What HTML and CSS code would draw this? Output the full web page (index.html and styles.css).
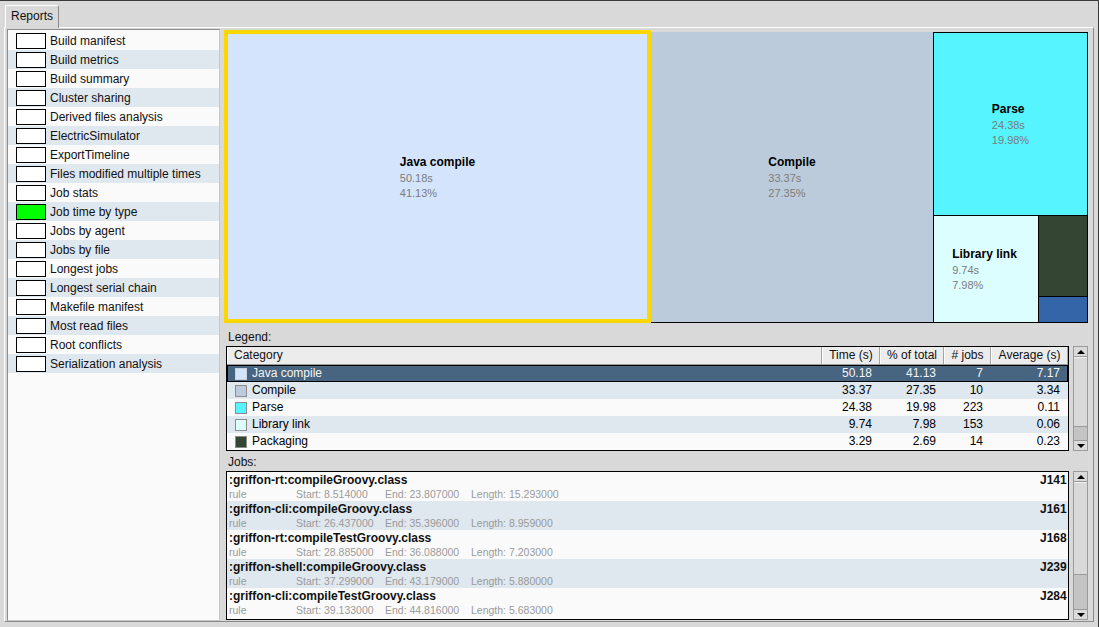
FILE: index.html
```html
<!DOCTYPE html>
<html>
<head>
<meta charset="utf-8">
<title>Reports</title>
<link rel="stylesheet" href="styles.css">
</head>
<body>
<div class="window">
  <div class="tabbar"><div class="tab">Reports</div></div>
  <div class="panel">
    <div class="reports">
      <div class="report"><span class="check"></span><span>Build manifest</span></div>
      <div class="report"><span class="check"></span><span>Build metrics</span></div>
      <div class="report"><span class="check"></span><span>Build summary</span></div>
      <div class="report"><span class="check"></span><span>Cluster sharing</span></div>
      <div class="report"><span class="check"></span><span>Derived files analysis</span></div>
      <div class="report"><span class="check"></span><span>ElectricSimulator</span></div>
      <div class="report"><span class="check"></span><span>ExportTimeline</span></div>
      <div class="report"><span class="check"></span><span>Files modified multiple times</span></div>
      <div class="report"><span class="check"></span><span>Job stats</span></div>
      <div class="report"><span class="check on"></span><span>Job time by type</span></div>
      <div class="report"><span class="check"></span><span>Jobs by agent</span></div>
      <div class="report"><span class="check"></span><span>Jobs by file</span></div>
      <div class="report"><span class="check"></span><span>Longest jobs</span></div>
      <div class="report"><span class="check"></span><span>Longest serial chain</span></div>
      <div class="report"><span class="check"></span><span>Makefile manifest</span></div>
      <div class="report"><span class="check"></span><span>Most read files</span></div>
      <div class="report"><span class="check"></span><span>Root conflicts</span></div>
      <div class="report"><span class="check"></span><span>Serialization analysis</span></div>
    </div>

    <div class="main">
      <div class="treemap">
        <div class="tile java"><div class="tile-text"><b>Java compile</b><span>50.18s</span><span>41.13%</span></div></div>
        <div class="tile compile"><div class="tile-text"><b>Compile</b><span>33.37s</span><span>27.35%</span></div></div>
        <div class="tm-col">
          <div class="tile parse"><div class="tile-text"><b>Parse</b><span>24.38s</span><span>19.98%</span></div></div>
          <div class="tm-bottom">
            <div class="tile lib"><div class="tile-text"><b>Library link</b><span>9.74s</span><span>7.98%</span></div></div>
            <div class="tm-small">
              <div class="tile pack"></div>
              <div class="tile blue"></div>
            </div>
          </div>
        </div>
      </div>

      <div class="section-label legend-label">Legend:</div>
      <div class="pane legend-pane">
        <div class="table">
          <div class="trow head">
            <div class="hc hc-cat">Category</div>
            <div class="hc">Time (s)</div>
            <div class="hc">% of total</div>
            <div class="hc"># jobs</div>
            <div class="hc">Average (s)</div>
          </div>
          <div class="trow sel">
            <div class="cat"><i class="sw sw-java"></i>Java compile</div>
            <div class="num">50.18</div><div class="num">41.13</div><div class="num">7</div><div class="num">7.17</div>
          </div>
          <div class="trow">
            <div class="cat"><i class="sw sw-compile"></i>Compile</div>
            <div class="num">33.37</div><div class="num">27.35</div><div class="num">10</div><div class="num">3.34</div>
          </div>
          <div class="trow">
            <div class="cat"><i class="sw sw-parse"></i>Parse</div>
            <div class="num">24.38</div><div class="num">19.98</div><div class="num">223</div><div class="num">0.11</div>
          </div>
          <div class="trow">
            <div class="cat"><i class="sw sw-lib"></i>Library link</div>
            <div class="num">9.74</div><div class="num">7.98</div><div class="num">153</div><div class="num">0.06</div>
          </div>
          <div class="trow">
            <div class="cat"><i class="sw sw-pack"></i>Packaging</div>
            <div class="num">3.29</div><div class="num">2.69</div><div class="num">14</div><div class="num">0.23</div>
          </div>
        </div>
        <div class="scrollbar">
          <div class="sb-btn up"></div>
          <div class="sb-thumb legend-thumb"></div>
          <div class="sb-track"></div>
          <div class="sb-btn down"></div>
        </div>
      </div>

      <div class="section-label jobs-label">Jobs:</div>
      <div class="pane jobs-pane">
        <div class="jobs">
          <div class="job">
            <div class="job-top"><span class="job-name">:griffon-rt:compileGroovy.class</span><span class="job-id">J141</span></div>
            <div class="job-sub"><span>rule</span><span>Start: 8.514000</span><span>End: 23.807000</span><span>Length: 15.293000</span></div>
          </div>
          <div class="job">
            <div class="job-top"><span class="job-name">:griffon-cli:compileGroovy.class</span><span class="job-id">J161</span></div>
            <div class="job-sub"><span>rule</span><span>Start: 26.437000</span><span>End: 35.396000</span><span>Length: 8.959000</span></div>
          </div>
          <div class="job">
            <div class="job-top"><span class="job-name">:griffon-rt:compileTestGroovy.class</span><span class="job-id">J168</span></div>
            <div class="job-sub"><span>rule</span><span>Start: 28.885000</span><span>End: 36.088000</span><span>Length: 7.203000</span></div>
          </div>
          <div class="job">
            <div class="job-top"><span class="job-name">:griffon-shell:compileGroovy.class</span><span class="job-id">J239</span></div>
            <div class="job-sub"><span>rule</span><span>Start: 37.299000</span><span>End: 43.179000</span><span>Length: 5.880000</span></div>
          </div>
          <div class="job">
            <div class="job-top"><span class="job-name">:griffon-cli:compileTestGroovy.class</span><span class="job-id">J284</span></div>
            <div class="job-sub"><span>rule</span><span>Start: 39.133000</span><span>End: 44.816000</span><span>Length: 5.683000</span></div>
          </div>
        </div>
        <div class="scrollbar">
          <div class="sb-btn up"></div>
          <div class="sb-thumb jobs-thumb"></div>
          <div class="sb-track"></div>
          <div class="sb-btn down"></div>
        </div>
      </div>
    </div>
  </div>
</div>
</body>
</html>
```

FILE: styles.css
```css
* { box-sizing: border-box; }
html, body { margin: 0; padding: 0; }
body {
  width: 1099px;
  height: 627px;
  overflow: hidden;
  background: #d9d9d9;
  font-family: "Liberation Sans", Arial, sans-serif;
  font-size: 12px;
  color: #000;
}
.window {
  height: 627px;
  border-top: 1px solid #3a3a3a;
  border-right: 1px solid #3a3a3a;
  display: flex;
  flex-direction: column;
}

/* tab strip */
.tabbar {
  height: 26px;
  flex: none;
  display: flex;
  align-items: flex-start;
  padding: 4px 0 0 5px;
}
.tab {
  height: 23px;
  padding: 0 5px;
  line-height: 21px;
  border: 1px solid #fff;
  border-right-color: #8a8a8a;
  border-bottom: none;
  border-radius: 0 3px 0 0;
  background: #d9d9d9;
  position: relative;
  z-index: 1;
  color: #111;
}

.panel {
  flex: 1;
  margin: 0 4px 5px 4px;
  border-top: 1px solid #fff;
  border-left: 1px solid #fff;
  border-right: 1px solid #8a8a8a;
  border-bottom: 1px solid #8a8a8a;
  display: flex;
  padding: 0 5px 0 2px;
}

/* report list */
.reports {
  width: 213px;
  margin-top: 1px;
  border: 1px solid #8c8c8c;
  border-right-color: #c8c8c8;
  border-bottom-color: #c8c8c8;
  background: #fafafa;
  padding-top: 1px;
}
.report {
  height: 19px;
  display: flex;
  align-items: center;
  gap: 4px;
  padding: 1px 0 1px 8px;
  color: #111;
}
.report:nth-child(even) { background: #dfe7ef; }
.check {
  width: 30px;
  height: 16px;
  flex: none;
  border: 1px solid #000;
  background: #fff;
}
.check.on { background: #00ff00; }

/* main area */
.main {
  width: 864px;
  margin: 2px 0 0 4px;
  display: flex;
  flex-direction: column;
}

.treemap {
  height: 293px;
  flex: none;
  display: flex;
  align-items: flex-start;
}
.tile {
  display: flex;
  align-items: center;
  justify-content: center;
}
.tile-text {
  display: flex;
  flex-direction: column;
}
.tile-text b {
  font-size: 12px;
  line-height: 17px;
  font-weight: bold;
  color: #000;
}
.tile-text span {
  font-size: 11px;
  line-height: 15px;
  color: #7c7c7c;
}
.java {
  width: 427px;
  height: 293px;
  border: 4px solid #ffd700;
  background: #d4e4fc;
  padding-top: 1px;
}
.compile {
  width: 282px;
  height: 291px;
  margin-top: 2px;
  background: #bccbdb;
  border-bottom: 1px solid #000;
}
.tm-col {
  width: 155px;
  height: 291px;
  margin-top: 2px;
  background: #000;
  padding: 1px;
  display: grid;
  grid-template-rows: 182px 1fr;
  gap: 1px;
}
.parse { background: #55f4fe; }
.tm-bottom {
  display: grid;
  grid-template-columns: 104px 1fr;
  gap: 1px;
}
.lib { background: #ddfefe; padding-right: 3px; }
.tm-small {
  display: grid;
  grid-template-rows: 80px 1fr;
  gap: 1px;
}
.pack { background: #344534; }
.blue { background: #3465a9; }

.section-label {
  padding-left: 4px;
  line-height: 14px;
  flex: none;
  color: #111;
}
.legend-label { height: 23px; padding-top: 7px; }
.jobs-label { height: 20px; padding-top: 4px; }

.pane {
  display: flex;
  gap: 4px;
  padding-left: 2px;
  flex: none;
}
.legend-pane { height: 105px; }
.jobs-pane { height: 149px; }

/* legend table */
.table {
  width: 843px;
  border: 1px solid #000;
  background: #fafafa;
}
.trow {
  display: grid;
  grid-template-columns: 595px 58px 64px 47px 77px;
  height: 17px;
  line-height: 17px;
}
.trow:nth-child(odd) { background: #dfe7ef; }
.trow.head {
  height: 18px;
  background: #ececec;
  border-bottom: 1px solid #9a9a9a;
}
.hc {
  text-align: center;
  border-left: 1px solid #fff;
  border-right: 1px solid #a4a4a4;
  white-space: nowrap;
  color: #111;
}
.hc-cat { text-align: left; padding-left: 6px; }
.trow.sel {
  background: #476480;
  color: #f4f4f4;
  box-shadow: inset 0 0 0 1px #000;
}
.cat {
  display: flex;
  align-items: center;
  gap: 5px;
  padding-left: 8px;
}
.num {
  text-align: right;
  padding-right: 8px;
}
.sw {
  width: 12px;
  height: 12px;
  border: 1px solid #8c8c8c;
  flex: none;
}
.sel .sw { border-color: #c9d3de; }
.sw-java { background: #d4e4fc; }
.sw-compile { background: #bccbdb; }
.sw-parse { background: #55f4fe; }
.sw-lib { background: #ddfefe; }
.sw-pack { background: #344534; }

/* scrollbars */
.scrollbar {
  width: 15px;
  border: 1px solid #9a9a9a;
  background: #c4c4c4;
  display: flex;
  flex-direction: column;
}
.sb-btn {
  height: 10px;
  flex: none;
  background: #dadada;
  display: flex;
  align-items: center;
  justify-content: center;
}
.sb-btn.up { border-bottom: 1px solid #9a9a9a; }
.sb-btn.down { border-top: 1px solid #9a9a9a; }
.sb-btn::before {
  content: "";
  width: 0;
  height: 0;
  border-left: 4px solid transparent;
  border-right: 4px solid transparent;
}
.up::before { border-bottom: 4px solid #000; }
.down::before { border-top: 4px solid #000; }
.sb-thumb {
  flex: none;
  background: #d9d9d9;
  border-bottom: 1px solid #9a9a9a;
  border-top: 1px solid #f0f0f0;
}
.legend-thumb { height: 70px; }
.jobs-thumb { height: 93px; }
.sb-track { flex: 1; }

/* jobs list */
.jobs {
  width: 843px;
  border: 1px solid #000;
  background: #fafafa;
}
.job {
  height: 29px;
  padding: 1px 0 0 2px;
}
.job:nth-child(even) { background: #dfe7ef; }
.job-top {
  display: flex;
  height: 14px;
  line-height: 14px;
  font-weight: bold;
  color: #111;
}
.job-name { flex: 1; white-space: nowrap; }
.job-id {
  width: 28px;
  white-space: nowrap;
}
.job-sub {
  display: grid;
  grid-template-columns: 67px 89px 86px auto;
  height: 14px;
  line-height: 14px;
  font-size: 10.5px;
  color: #9a9a9a;
  white-space: nowrap;
}
```
